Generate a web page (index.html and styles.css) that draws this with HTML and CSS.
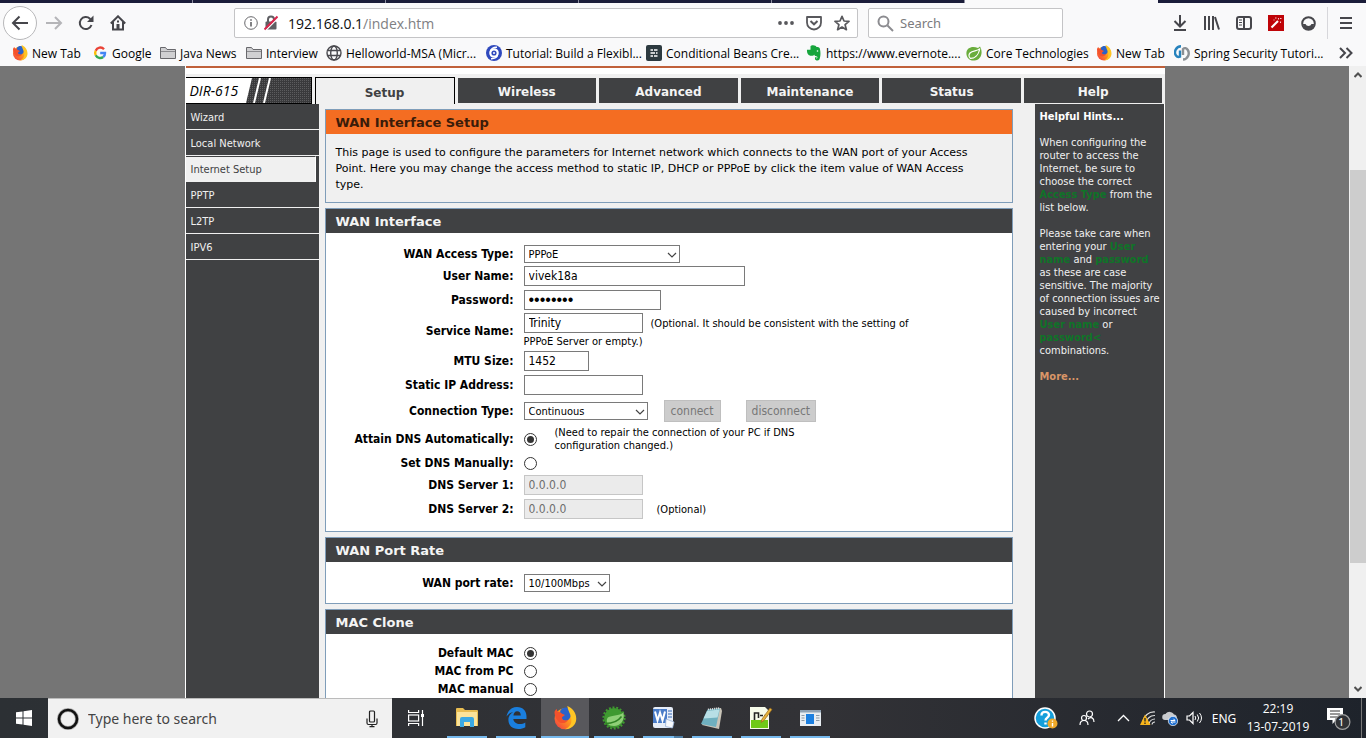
FILE: index.html
```html
<!DOCTYPE html>
<html lang="en">
<head>
<meta charset="utf-8">
<title>D-Link DIR-615 - WAN Interface Setup</title>
<link rel="stylesheet" href="styles.css">
</head>
<body>
<svg class="defs" aria-hidden="true">
  <defs>
    <linearGradient id="flame" x1="1" y1="0" x2="0" y2="1"><stop offset="0" stop-color="#ffe226"/><stop offset=".45" stop-color="#ff9a1a"/><stop offset="1" stop-color="#f0304a"/></linearGradient>
    <pattern id="mesh" width="2" height="2" patternUnits="userSpaceOnUse"><rect width="2" height="2" fill="#3a3a3c"/><rect width="1" height="1" fill="#5c5c5e"/></pattern>
    <symbol id="firefox" viewBox="0 0 16 16">
      <circle cx="8" cy="8.5" r="7" fill="url(#flame)"/>
      <path d="M5 2.800C7-.2 11.500.6 12 4c.3 3-1 5.500-3.500 5.800C6 9.900 4.500 8 4.200 6z" fill="#2a62c9"/>
      <path d="M9.500 0c3 1.200 6 4 6 8.500 0 4-3.300 7-7.500 7 3.500-1.500 5-4.500 4-8C11.500 5 10 3 9.500 0z" fill="#ffc524"/>
      <path d="M1 4c.3-.8.8-1.600 1.500-2 0 .7.300 1.300.8 1.800 1 0 2 .4 2.500 1.200L8 6 6 7.500c0 2 2 2.500 4 1.800-1 2.700-6 3-7.500-.3C1.500 7.500 1 6 1 4z" fill="#f4512c"/>
    </symbol>
    <symbol id="folder" viewBox="0 0 16 16"><path d="M.5 13.500v-11h5l1.500 2h8.500v9z" fill="#d0d0d2" stroke="#68686c"/><path d="M1 6.500h14" stroke="#8c8c90"/></symbol>
    <symbol id="chev" viewBox="0 0 10 6"><path d="M1 1l4 4 4-4" fill="none" stroke="#444" stroke-width="1.200"/></symbol>
  </defs>
</svg>

<header class="browser">
  <div class="tabstrip"><i></i><i></i><i></i><i></i><i></i><i class="current"></i><i></i></div>
  <div class="toolbar">
    <button class="back" aria-label="Back"><svg width="18" height="16" viewBox="0 0 18 16"><path d="M17 8H2M8.500 1.500L2 8l6.500 6.500" fill="none" stroke="#46464b" stroke-width="2"/></svg></button>
    <button class="tool" aria-label="Forward"><svg width="18" height="16" viewBox="0 0 18 16"><path d="M1 8h15M10 2l6 6-6 6" fill="none" stroke="#b5b5b8" stroke-width="2"/></svg></button>
    <button class="tool" aria-label="Reload"><svg width="16" height="16" viewBox="0 0 16 16"><path d="M13.500 10A6 6 0 1 1 12 3.700L13.500 5" fill="none" stroke="#46464b" stroke-width="2"/><path d="M15.500.5V7H9z" fill="#46464b"/></svg></button>
    <button class="tool" aria-label="Home"><svg width="16" height="16" viewBox="0 0 16 16"><path d="M.8 8.500L8 1.300l7.200 7.200M3 7v7.500h10V7" fill="none" stroke="#46464b" stroke-width="2"/><path d="M6.500 14.500V9h3v5.500zM7 5.500h2v2H7z" fill="#46464b"/></svg></button>
    <div class="urlbar">
      <svg width="14" height="14" viewBox="0 0 14 14"><circle cx="7" cy="7" r="6.300" fill="none" stroke="#68686c"/><path d="M7 6v4.500M7 3.300v1.400" stroke="#58585c" stroke-width="1.500"/></svg>
      <svg width="14" height="16" viewBox="0 0 14 16"><path d="M4 7V4.500a3 3 0 0 1 6 0V7" fill="none" stroke="#5f5f63" stroke-width="2"/><rect x="1.500" y="6.500" width="11" height="8" rx="1" fill="#5f5f63"/><path d="M1.500 15.500l12-12" stroke="#fff" stroke-width="1.500"/><path d="M.5 14.500l13-13" stroke="#d7264c" stroke-width="2"/></svg>
      <p class="address">192.168.0.1<span>/index.htm</span></p>
      <svg width="16" height="4" viewBox="0 0 16 4"><g fill="#58585c"><circle cx="2" cy="2" r="1.900"/><circle cx="8" cy="2" r="1.900"/><circle cx="14" cy="2" r="1.900"/></g></svg>
      <svg width="16" height="15" viewBox="0 0 16 15"><path d="M1 1h14v5.500a7 7 0 0 1-14 0z" fill="none" stroke="#58585c" stroke-width="1.800" stroke-linejoin="round"/><path d="M4.500 5L8 8.300 11.500 5" fill="none" stroke="#58585c" stroke-width="2"/></svg>
      <svg width="16" height="16" viewBox="0 0 16 16"><path d="M8 1.300l2 4.700 5 .4-3.900 3.300 1.300 5L8 12l-4.400 2.700 1.300-5L1 6.400 6 6z" fill="none" stroke="#58585c" stroke-width="1.700" stroke-linejoin="round"/></svg>
    </div>
    <label class="searchbar">
      <svg width="17" height="17" viewBox="0 0 17 17"><circle cx="6.500" cy="6.500" r="5" fill="none" stroke="#8c8c90" stroke-width="2"/><path d="M10.500 10.500L16 16" stroke="#8c8c90" stroke-width="2"/></svg>
      <input type="text" placeholder="Search" aria-label="Search the web">
    </label>
    <div class="tools">
      <button class="tool" aria-label="Downloads"><svg width="14" height="16" viewBox="0 0 14 16"><path d="M7 0v11M1.500 6L7 11.500 12.500 6M1 15h12" fill="none" stroke="#46464b" stroke-width="2"/></svg></button>
      <button class="tool" aria-label="Library"><svg width="16" height="14" viewBox="0 0 16 14"><path d="M1 0v14M5 0v14M9 0v14M11 1l4 12.500" fill="none" stroke="#46464b" stroke-width="2"/></svg></button>
      <button class="tool" aria-label="Sidebars"><svg width="16" height="14" viewBox="0 0 16 14"><rect x="1" y="1" width="14" height="12" rx="2" fill="none" stroke="#46464b" stroke-width="2"/><path d="M8 1v12" stroke="#46464b" stroke-width="2"/><path d="M3 4h3M3 6.500h3M3 9h3" stroke="#46464b"/></svg></button>
      <button class="tool" aria-label="Magic wand"><svg width="16" height="16" viewBox="0 0 16 16"><rect width="16" height="16" fill="#bf0408"/><path d="M3.500 12.500L10 6" stroke="#fff" stroke-width="2.200"/><path d="M7 3h1.500M10.500 3v1.500M12.500 6.500v1.500M5.500 5h1M12 3.500h1.500" stroke="#f7c6c6" stroke-width="1.100"/></svg></button>
      <button class="tool" aria-label="Account"><svg width="15" height="15" viewBox="0 0 15 15"><circle cx="7.500" cy="7.500" r="6.300" fill="none" stroke="#46464b" stroke-width="2"/><path d="M2 8h2.500a3.200 3.200 0 0 0 6 0H13c0 3.500-2.500 5.800-5.500 5.800S2 11.500 2 8z" fill="#46464b"/></svg></button>
      <button class="tool menu" aria-label="Menu"><svg width="14" height="12" viewBox="0 0 14 12"><path d="M1 1h12M1 6h12M1 11h12" stroke="#46464b" stroke-width="2"/></svg></button>
    </div>
  </div>
  <nav class="bookmarks">
    <a href="#"><svg width="16" height="16"><use href="#firefox"/></svg>New Tab</a>
    <a href="#"><svg width="16" height="16" viewBox="0 0 16 16"><g fill="none" stroke-width="2.400"><path d="M12 4.200A5 5 0 0 0 3.700 5.700" stroke="#ea4335"/><path d="M3.700 5.700a5 5 0 0 0 0 4.600" stroke="#fbbc05"/><path d="M3.700 10.300a5 5 0 0 0 7.500 1.700" stroke="#34a853"/><path d="M11.200 12A5 5 0 0 0 13 8H8.200" stroke="#4285f4"/></g></svg>Google</a>
    <a href="#"><svg width="16" height="16"><use href="#folder"/></svg>Java News</a>
    <a href="#"><svg width="16" height="16"><use href="#folder"/></svg>Interview</a>
    <a href="#"><svg width="16" height="16" viewBox="0 0 16 16"><g fill="none" stroke="#4a4a4f" stroke-width="1.400"><circle cx="8" cy="8" r="7"/><ellipse cx="8" cy="8" rx="3.300" ry="7"/><path d="M2 5.500h12M2 10.500h12"/></g></svg>Helloworld-MSA (Micr...</a>
    <a href="#"><svg width="16" height="16" viewBox="0 0 16 16"><circle cx="8" cy="8" r="8" fill="#2f49bd"/><circle cx="8" cy="8" r="3.700" fill="none" stroke="#fff" stroke-width="2.200"/><circle cx="8" cy="8" r="1" fill="#fff"/><path d="M4.500 7C4.500 3.500 7.500 2 11 2.200M11.500 9c0 3.500-3 5-6.500 4.800" fill="none" stroke="#fff" stroke-width="1.400"/></svg>Tutorial: Build a Flexibl...</a>
    <a href="#"><svg width="16" height="16" viewBox="0 0 16 16"><rect width="16" height="16" rx="2" fill="#2d3a40"/><path d="M4.500 5h2.500M8 5h3.500M4.500 8H9M10 8h1.500M4.500 11h2.500M8 11h3.500" stroke="#fff" stroke-width="1.500"/></svg>Conditional Beans Cre...</a>
    <a href="#"><svg width="16" height="16" viewBox="0 0 16 16"><path d="M1.500 4L5 .7C8-.3 10 1 10.500 2c2 0 3.500.5 3.500 2.500.8 3 .5 7.500-.6 10-1 1.500-4 1.300-4.400-.5-.2-1.500.5-2.300 1.700-2.300 0 .8-.3 1.300-.6 1.800 1.800.3 1.600-2.500 0-2.500-1.200.3-1.800-1-1.800-1.600-.5 1.300-2.300 1.600-4 1.300C1.500 10 .8 7 1 4.700h3.500V1.300z" fill="#16a53c"/><circle cx="11.500" cy="6" r=".8" fill="#fff"/></svg>https://www.evernote....</a>
    <a href="#"><svg width="16" height="16" viewBox="0 0 16 16"><path d="M14 1.500c3.500 6 1 13.500-5.500 14C3 16 .3 12 .4 8 .5 2.500 6.500.5 12 3z" fill="#6aad3d"/><path d="M13.800 3.500C11.500 6.800 7 5 4 8c-1.500 1.700-1.300 4 .3 5.300C8 13.500 12.500 11 13.800 3.500z" fill="#6aad3d" stroke="#fff" stroke-width="1.200"/></svg>Core Technologies</a>
    <a href="#"><svg width="16" height="16"><use href="#firefox"/></svg>New Tab</a>
    <a href="#"><svg width="16" height="16" viewBox="0 0 16 16"><path d="M7 1.300C2 1.500-.5 7 2 10.500c1 1.500 2.500 1.800 4 1.200V5.500" fill="none" stroke="#2783bd" stroke-width="2.400"/><path d="M9 14.500c5 0 7-6 4.800-9.500C12.500 3 10.500 2.500 9 4v6" fill="none" stroke="#8b9094" stroke-width="2.400"/></svg>Spring Security Tutori...</a>
    <button class="overflow" aria-label="More bookmarks"><svg width="14" height="12" viewBox="0 0 14 12"><path d="M1 1l5 5-5 5M7.500 1l5 5-5 5" fill="none" stroke="#46464b" stroke-width="2"/></svg></button>
  </nav>
</header>

<div class="viewport">
  <div class="canvas">
    <div class="page">
      <div class="banner"></div>
      <nav class="tabs">
        <div class="model"><em>DIR-615</em>
          <svg width="65" height="25" viewBox="0 0 65 25"><path d="M6 0h59v25H0z" fill="url(#mesh)"/><path d="M14 0L8 25M24 0l-6 25" stroke="#fff" stroke-width="2"/></svg>
        </div>
        <a class="active" href="#">Setup</a><a href="#">Wireless</a><a href="#">Advanced</a><a href="#">Maintenance</a><a href="#">Status</a><a href="#">Help</a>
      </nav>
      <div class="columns">
        <nav class="side">
          <a href="#">Wizard</a><a href="#">Local Network</a><a class="active" href="#">Internet Setup</a><a href="#">PPTP</a><a href="#">L2TP</a><a href="#">IPV6</a>
        </nav>
        <main class="content">
          <section class="panel intro">
            <h1>WAN Interface Setup</h1>
            <p>This page is used to configure the parameters for Internet network which connects to the WAN port of your Access<br>Point. Here you may change the access method to static IP, DHCP or PPPoE by click the item value of WAN Access<br>type.</p>
          </section>
          <section class="panel">
            <h2>WAN Interface</h2>
            <form class="fields">
              <div class="row short"><label for="wan">WAN Access Type:</label><div class="cell"><span class="drop w-type"><select id="wan"><option>PPPoE</option></select><svg width="10" height="6"><use href="#chev"/></svg></span></div></div>
              <div class="row"><label for="user">User Name:</label><div class="cell"><input class="w-user" id="user" type="text" value="vivek18a"></div></div>
              <div class="row"><label for="pass">Password:</label><div class="cell"><input class="w-pass" id="pass" type="password" value="password"></div></div>
              <div class="row service"><label for="svc">Service Name:</label><div class="cell"><input class="w-mid" id="svc" type="text" value="Trinity"><small>(Optional. It should be consistent with the setting of</small><small class="wrap">PPPoE Server or empty.)</small></div></div>
              <div class="row"><label for="mtu">MTU Size:</label><div class="cell"><input class="w-mtu" id="mtu" type="text" value="1452"></div></div>
              <div class="row"><label for="sip">Static IP Address:</label><div class="cell"><input class="w-mid" id="sip" type="text"></div></div>
              <div class="row tall"><label for="conn">Connection Type:</label><div class="cell"><span class="drop w-conn"><select id="conn"><option>Continuous</option></select><svg width="10" height="6"><use href="#chev"/></svg></span><button type="button" class="act" disabled>connect</button><button type="button" class="act far" disabled>disconnect</button></div></div>
              <div class="row tall"><label for="auto">Attain DNS Automatically:</label><div class="cell"><input type="radio" id="auto" name="dns" checked><small class="note">(Need to repair the connection of your PC if DNS<br>configuration changed.)</small></div></div>
              <div class="row short"><label for="man">Set DNS Manually:</label><div class="cell"><input type="radio" id="man" name="dns"></div></div>
              <div class="row"><label for="d1">DNS Server 1:</label><div class="cell"><input class="w-mid" id="d1" type="text" value="0.0.0.0" disabled></div></div>
              <div class="row"><label for="d2">DNS Server 2:</label><div class="cell"><input class="w-mid" id="d2" type="text" value="0.0.0.0" disabled><small class="opt">(Optional)</small></div></div>
            </form>
          </section>
          <section class="panel">
            <h2>WAN Port Rate</h2>
            <form class="fields">
              <div class="row short"><label for="rate">WAN port rate:</label><div class="cell"><span class="drop w-rate"><select id="rate"><option>10/100Mbps</option></select><svg width="10" height="6"><use href="#chev"/></svg></span></div></div>
            </form>
          </section>
          <section class="panel">
            <h2>MAC Clone</h2>
            <form class="fields mac">
              <div class="row"><label for="m1">Default MAC</label><div class="cell"><input type="radio" id="m1" name="mac" checked></div></div>
              <div class="row"><label for="m2">MAC from PC</label><div class="cell"><input type="radio" id="m2" name="mac"></div></div>
              <div class="row"><label for="m3">MAC manual</label><div class="cell"><input type="radio" id="m3" name="mac"></div></div>
            </form>
          </section>
        </main>
        <aside class="hints">
          <h2>Helpful Hints...</h2>
          <p>When configuring the<br>router to access the<br>Internet, be sure to<br>choose the correct<br><b>Access Type</b> from the<br>list below.</p>
          <p>Please take care when<br>entering your <b>User<br>name</b> and <b>password</b><br>as these are case<br>sensitive. The majority<br>of connection issues are<br>caused by incorrect<br><b>User name</b> or<br><b>password&lt;</b><br>combinations.</p>
          <a href="#">More...</a>
        </aside>
      </div>
    </div>
  </div>
  <div class="scroll">
    <svg width="8" height="6" viewBox="0 0 8 6"><path d="M.5 5L4 1.500 7.500 5" fill="none" stroke="#505050" stroke-width="2"/></svg>
    <div class="track"><div class="thumb"></div></div>
    <svg width="8" height="6" viewBox="0 0 8 6"><path d="M.5 1L4 4.500 7.500 1" fill="none" stroke="#505050" stroke-width="2"/></svg>
  </div>
</div>

<footer class="taskbar">
  <button class="start" aria-label="Start"><svg width="16" height="16" viewBox="0 0 16 16"><path d="M0 2.300L6.500 1.400v6.100H0zM7.500 1.200L16 0v7.500H7.500zM0 8.500h6.500v6.100L0 13.700zM7.500 8.500H16V16l-8.500-1.200z" fill="#fff"/></svg></button>
  <label class="ask">
    <svg width="22" height="22" viewBox="0 0 22 22"><circle cx="11" cy="11" r="9" fill="none" stroke="#b0b0b0" stroke-width="4"/><circle cx="11" cy="11" r="9" fill="none" stroke="#111" stroke-width="2.600"/></svg>
    <input type="text" placeholder="Type here to search" aria-label="Windows search">
    <svg width="12" height="18" viewBox="0 0 12 18"><rect x="3.500" y="1" width="5" height="11" rx="1" fill="none" stroke="#222" stroke-width="1.200"/><path d="M1 8.500V13q0 1.500 1.500 1.500h7Q11 14.500 11 13V8.500M6 14.500v2M3.500 16.600h5" fill="none" stroke="#222" stroke-width="1.200"/></svg>
  </label>
  <div class="apps">
    <button class="app view" aria-label="Task view"><svg width="16" height="16" viewBox="0 0 16 16"><g fill="none" stroke="#fff" stroke-width="1.200"><path d="M.6 0v2.500h10V0M.6 16v-2.500h10V16"/><rect x=".6" y="5" width="10" height="6"/><path d="M14.500 0v16"/></g><rect x="13" y="4" width="3" height="3" fill="#fff"/></svg></button>
    <button class="app" aria-label="File Explorer"><svg width="22" height="20" viewBox="0 0 22 20"><path d="M0 1q0-1 1-1h6l2 2h12q1 0 1 1v15H0z" fill="#e8bd52"/><path d="M1 4h20v14H1z" fill="#fbe39a"/><path d="M4 19v-8q0-2 2-2h10q2 0 2 2v8h-4v-5H8v5z" fill="#3ba9e3"/></svg></button>
    <button class="app" aria-label="Edge"><svg width="21" height="22" viewBox="0 0 21 22"><path d="M.5 9.500C1.500 3.500 6 0 11 0c6 0 9.500 4 9.500 9.500V12H7.300c.4 3.500 3.400 5 6.400 5 2.200 0 4-.6 5.600-1.600v4.800C17.500 21.300 15 22 12.300 22 6 22 2.400 18 2.400 12.700c0-3.400 1.800-6 4.700-7.400C4.300 5.500 2 7 .5 9.500zM7.400 8.500h7.400c0-2.700-1.500-4.200-3.700-4.200-2 0-3.400 1.700-3.700 4.200z" fill="#1a7fde"/></svg></button>
    <button class="app focus" aria-label="Firefox"><svg width="24" height="24"><use href="#firefox"/></svg></button>
    <button class="app" aria-label="Spring Tool Suite"><svg width="24" height="24" viewBox="0 0 24 24"><circle cx="12" cy="12" r="10.600" fill="none" stroke="#3f9a30" stroke-width="2" stroke-dasharray="2 1.700"/><circle cx="12" cy="12" r="10" fill="#3f9a30"/><path d="M21.500 6.500c1.500 8-3 13.500-9.500 13.500-6 0-8-3.500-7-7C6.500 8.500 16 11 21.500 6.500z" fill="#8fd077"/><path d="M3.500 17.500c6 0 12-1.500 16-7" fill="none" stroke="#2f8424" stroke-width="1.500"/></svg></button>
    <button class="app stacked" aria-label="Word"><svg width="23" height="22" viewBox="0 0 23 22"><path d="M3 0h16q2 0 2 2v17q0 2-2 2H3q-2 0-2-2V2q0-2 2-2z" fill="#e6edf8"/><path d="M1 2h14v14H1z" fill="#4a7cc8"/><path d="M3 4.500l2.500 9 2.500-8 2.500 8L13 4.500" fill="none" stroke="#fff" stroke-width="2"/><path d="M16 4h4M16 7h4M16 10h4" stroke="#6d93cc" stroke-width="1.500"/><path d="M14 12l8 3-1.500 6-7-1.500z" fill="#f7f9fc" stroke="#9bb2d6" stroke-width=".8"/></svg></button>
    <button class="app" aria-label="Notepad"><svg width="24" height="22" viewBox="0 0 24 22"><path d="M9 2.500L21 1l1 3-3 18L2 18z" fill="#c9c4b8"/><path d="M7.500 2.500L20 1.200 16 20 1 17z" fill="#6fb0bf"/><path d="M7 4l12.500-1.500-2 8-14 1z" fill="#b8dfe6"/><path d="M8 2.500L20 1" stroke="#ddd" stroke-width="2" stroke-dasharray="1 1"/></svg></button>
    <button class="app" aria-label="Notepad++"><svg width="24" height="24" viewBox="0 0 24 24"><path d="M1 1h15l4 4v18H1z" fill="#f6fbea"/><path d="M2 14h17v8H2z" fill="#6fc918"/><path d="M5.500 14V7h4v5M11 9.500h3M15.500 9.500h3" fill="none" stroke="#222" stroke-width="1.600"/><path d="M21 2l2 1.500-8 11-3 2 1-3.500z" fill="#e6b23c" stroke="#9a6a1b" stroke-width=".7"/></svg></button>
    <button class="app" aria-label="Window"><svg width="21" height="16" viewBox="0 0 21 16"><path d="M0 0h21v16H0z" fill="#e8edf2"/><path d="M0 0h21v2.500H0z" fill="#8fa1b3"/><path d="M6 4h8v10H6z" fill="#1c7fe0"/><path d="M1.500 5.500h3M1.500 8h3M1.500 10.500h3M16 5.500h3.500M16 8h3.500M16 10.500h3.500" stroke="#8d99a5"/></svg></button>
  </div>
  <div class="tray">
    <span class="t-help"><svg width="24" height="22" viewBox="0 0 24 22"><circle cx="11" cy="11" r="10" fill="#159fdb" stroke="#fff" stroke-width="1.500"/><path d="M7.500 8.500c0-5 7.500-4.500 7.500-.5 0 2.500-3.500 2.800-3.500 5.500M11.500 15.500v2" fill="none" stroke="#fff" stroke-width="2.400"/><circle cx="18.500" cy="16.500" r="5" fill="#f0a92a"/><path d="M18.500 13.500v1.300M18.500 16v3.500" stroke="#fff" stroke-width="1.400"/></svg></span>
    <span class="t-people"><svg width="16" height="16" viewBox="0 0 16 16"><g fill="none" stroke="#fff" stroke-width="1.200"><circle cx="10.500" cy="4" r="3"/><circle cx="5" cy="8" r="2.500"/><path d="M1 15c0-6 8-6 8 0M9 9c3-3 6-1 6 3"/></g></svg></span>
    <span class="t-up"><svg width="13" height="8" viewBox="0 0 13 8"><path d="M1 7l5.500-5.500L12 7" fill="none" stroke="#fff" stroke-width="1.300"/></svg></span>
    <span class="t-wifi"><svg width="16" height="16" viewBox="0 0 16 16"><g fill="none" stroke="#ddd" stroke-width="1.200"><path d="M3 12A11 11 0 0 1 15 2M6 13a8.500 8.500 0 0 1 9-7.500M9 14a6 6 0 0 1 6-5M12 14.500a3 3 0 0 1 3-2.500"/></g><path d="M5 4.500L10.500 15H0z" fill="#f5b31b"/><path d="M5 8v3.500M5 12.500v1.500" stroke="#222" stroke-width="1.300"/></svg></span>
    <span class="t-cloud"><svg width="16" height="15" viewBox="0 0 16 15"><path d="M3 9a3 3 0 0 1 .5-6A5 5 0 0 1 12 3.500c3 0 4 4 1.500 5.500z" fill="#c9cbce"/><circle cx="11" cy="10" r="4.700" fill="#1f6fd0" stroke="#fff" stroke-width=".7"/><path d="M8.500 9.500h4.500l-1.500-1.700M13.500 11H9l1.500 1.700" fill="none" stroke="#fff"/></svg></span>
    <span class="t-vol"><svg width="17" height="14" viewBox="0 0 17 14"><path d="M1 5h2.500L7 1.500v11L3.500 9H1z" fill="none" stroke="#fff" stroke-width="1.200"/><path d="M9 5q1.500 2 0 4M11.300 3.500q2.700 3.500 0 7M13.500 2q4 5 0 10" fill="none" stroke="#fff"/></svg></span>
    <span class="t-lang">ENG</span>
    <span class="t-clock">22:19<br>13-07-2019</span>
    <span class="t-note"><svg width="26" height="26" viewBox="0 0 26 26"><path d="M2 3h16v12h-7l-3.500 4v-4H2z" fill="#fff"/><path d="M5 6h10M5 9h10M5 12h7" stroke="#333"/><circle cx="17.500" cy="17" r="7.400" fill="#303236" stroke="#a0a0a0" stroke-width="1.200"/></svg><b>1</b></span>
    <span class="t-desk"></span>
  </div>
</footer>
</body>
</html>
```

FILE: styles.css
```css
* { box-sizing: border-box; }
body {
  margin: 0;
  height: 100vh;
  display: flex;
  flex-direction: column;
  overflow: hidden;
  font-family: "DejaVu Sans Condensed", "DejaVu Sans", sans-serif;
  font-size: 12px;
  color: #000;
}
a { text-decoration: none; color: inherit; }
button { border: 0; padding: 0; background: none; font: inherit; }
h1, h2, p { margin: 0; }
svg { display: block; flex: none; }
.defs { position: absolute; width: 0; height: 0; }

/* browser chrome */
.browser { background: #f9f9fa; font-family: "Open Sans", "Noto Sans", sans-serif; flex: none; }
.tabstrip { display: flex; height: 3px; background: #1b1d3a; }
.tabstrip i { flex: 0 0 193px; border-right: 1px solid #8d8ea0; }
.tabstrip i:last-child { border: 0; flex: 1; }
.tabstrip .current { background: #f9f9fa; border: 0; }
.toolbar { display: flex; align-items: center; height: 40px; padding: 0 3px; }
.back { width: 34px; height: 34px; border: 1px solid #b8b8ba; border-radius: 50%; background: #fff; display: grid; place-items: center; margin-right: 1px; }
.tool { width: 32px; height: 32px; display: grid; place-items: center; }
.urlbar { flex: 1; height: 30px; margin-left: 100px; padding: 0 7px 0 9px; border: 1px solid #c4c4c6; border-radius: 2px; background: #fff; display: flex; align-items: center; gap: 6px; }
.address { flex: 1; margin-left: 4px; font-size: 14px; color: #0c0c0d; }
.address span { color: #808083; }
.urlbar svg:nth-of-type(n+4) { margin-left: 6px; }
.searchbar { width: 195px; height: 30px; margin-left: 10px; padding-left: 8px; border: 1px solid #c4c4c6; border-radius: 2px; background: #fff; display: flex; align-items: center; gap: 6px; }
.searchbar input, .ask input { border: 0; outline: 0; background: none; min-width: 0; flex: 1; font: 14px "Noto Sans", sans-serif; padding: 0; }
.searchbar input { font-size: 13px; }
.searchbar input::placeholder { color: #7b7b7e; }
.tools { display: flex; margin-left: 101px; }
.menu { margin-left: 3px; border-left: 1px solid #d7d7db; width: 36px; }
.bookmarks { display: grid; grid-template-columns: 80px 68px 86px 80px 160px 160px 160px 160px 130px 78px 1fr 20px; height: 23px; padding: 0 10px 3px 12px; align-items: center; white-space: nowrap; }
.bookmarks a { display: flex; align-items: center; gap: 4px; }
.overflow { display: grid; place-items: center; }

/* viewport */
.viewport { flex: 1; min-height: 0; display: flex; }
.canvas { flex: 1; background: #757575; overflow: hidden; }
.page { max-width: 980px; min-height: 100%; margin: 0 auto; background: #f0f0f0; border-left: 1px solid #fff; display: flex; flex-direction: column; }
.banner { height: 8px; border-top: 2px solid #c0603a; background: #fff; flex: none; }
.tabs { display: flex; align-items: flex-end; gap: 3px; height: 30px; padding: 3px 2px 0 0; font: bold 12px "DejaVu Sans", sans-serif; }
.tabs a { flex: 1; height: 25px; padding-top: 3px; background: #404143; color: #f4f4f4; display: grid; place-items: center; margin-bottom: 1px; }
.tabs .active { flex: 0 0 140px; height: 27px; margin: 0; background: #f0f0f0; color: #404143; border: 1px solid #000; border-bottom: 0; }
.model { flex: 0 0 126px; height: 27px; border: 1px solid #000; border-left: 0; background: #fff; display: flex; align-items: center; justify-content: space-between; padding-left: 4px; }
.model em { font: italic 14px "Open Sans", sans-serif; }
.columns { flex: 1; display: flex; }

.side { flex: 0 0 133px; background: #404143; color: #f0f0f0; font-size: 11px; }
.side a { display: flex; align-items: center; height: 26px; padding: 1px 0 0 5px; border-bottom: 1px solid #f0f0f0; }
.side .active { margin-right: 3px; background: #f0f0f0; color: #404143; border-top: 1px solid #404143; border-right: 1px solid #fff; }

.content { flex: 1; min-width: 0; padding: 5px 22px 0 6px; display: flex; flex-direction: column; gap: 5px; }
.panel { border: 1px solid #7f9db9; background: #fff; }
.panel h1, .panel h2 { height: 24px; padding: 0 10px; font: bold 13px/25px "DejaVu Sans", sans-serif; background: #404143; color: #f4f4f4; }
.panel h1 { background: #f46d22; color: #3a1c0a; }
.intro { background: #f0f0f0; }
.intro p { padding: 11px 10px 9px; font: 11px/16px "DejaVu Sans", sans-serif; white-space: nowrap; }

.fields { padding: 11px 0 10px; }
.row { display: grid; grid-template-columns: 188px 1fr; column-gap: 10px; align-items: center; min-height: 24px; }
.row > label { text-align: right; font-weight: bold; white-space: nowrap; }
.short { min-height: 20px; }
.tall { min-height: 28px; }
.mac { padding-top: 10px; }
.mac .row { min-height: 18px; }
.cell { display: flex; flex-wrap: wrap; align-items: center; }
.cell input[type=text], .cell input[type=password] { height: 20px; border: 1px solid #7a7a7a; background: #fff; padding: 0 4px; font: inherit; color: #000; }
.cell input[type=password] { font: 16px "Liberation Sans", sans-serif; }
.cell input[type=text]:disabled { background: #ebebeb; border-color: #c6c6c6; color: #6d6d6d; }
.w-user { width: 221px; }
.w-pass { width: 137px; }
.w-mid { width: 119px; }
.w-mtu { width: 65px; }
.w-type { width: 156px; }
.w-conn { width: 124px; }
.w-rate { width: 86px; }
.cell small { font-size: 11px; line-height: 13px; margin-left: 8px; }
.cell .wrap { flex-basis: 100%; margin: 2px 0 0; }
.cell .note { margin-left: 18px; }
.cell .opt { margin-left: 14px; }
.service { min-height: 37px; }
.drop { position: relative; display: block; height: 18px; }
.drop select { appearance: none; width: 100%; height: 18px; border: 1px solid #7a7a7a; border-radius: 0; background: #fff; padding: 0 4px; font: inherit; font-size: 11px; color: #000; }
.drop svg { position: absolute; right: 3px; top: 7px; pointer-events: none; }
.act { height: 22px; margin-left: 16px; padding: 0 6px; background: #ccc; border: 1px solid #bfbfbf; color: #777; }
.far { margin-left: 25px; padding: 0 5px; }
input[type=radio] { appearance: none; width: 13px; height: 13px; margin: 0; border: 1px solid #333; border-radius: 50%; background: #fff; display: grid; place-items: center; }
input[type=radio]:checked::before { content: ""; width: 7px; height: 7px; border-radius: 50%; background: #333; }

.hints { flex: 0 0 130px; padding: 6px 0 0 5px; background: #404143; border-right: 1px solid #fff; color: #f0f0f0; font-size: 11px; line-height: 13px; white-space: nowrap; }
.hints h2 { font-size: 11px; line-height: 13px; color: #fff; }
.hints p { margin: 13px 0; }
.hints b { color: #0f7428; }
.hints a { color: #d99567; font-weight: bold; }

.scroll { flex: 0 0 17px; background: #f0f0f0; display: flex; flex-direction: column; align-items: center; padding: 6px 0; }
.track { flex: 1; align-self: stretch; display: flex; flex-direction: column; padding: 92px 0 0 1px; }
.thumb { flex: 0 0 393px; background: #cdcdcd; }

/* taskbar */
.taskbar { flex: none; display: flex; height: 40px; background: linear-gradient(90deg, #2c3034, #323236 60%, #1e232b); color: #fff; font-family: "Noto Sans", sans-serif; }
.start { width: 48px; display: grid; place-items: center; }
.ask { width: 344px; padding: 0 14px 0 9px; background: #f1f1f1; border-top: 1px solid #bbb; display: flex; align-items: center; gap: 9px; }
.ask input::placeholder { color: #444; }
.apps { display: flex; flex: 1; gap: 1px; }
.app { width: 48px; display: grid; place-items: center; background: linear-gradient(#76b9ed, #76b9ed) center bottom / 40px 2px no-repeat; }
.view { background: none; margin-right: 2px; }
.focus { background: linear-gradient(#76b9ed, #76b9ed) center bottom / 48px 2px no-repeat #58585c; }
.stacked { background-image: linear-gradient(90deg, #76b9ed 78%, #4f7fa6 78%); }
.tray { display: flex; align-items: center; }
.tray span { display: grid; place-items: center; }
.t-help { width: 40px; }
.t-people { width: 42px; }
.t-up { width: 30px; }
.t-wifi { width: 20px; }
.t-cloud, .t-vol { width: 24px; }
.t-lang { width: 36px; }
.tray .t-clock { width: 72px; display: block; text-align: center; font: 12px/18px "Open Sans", sans-serif; white-space: nowrap; }
.tray .t-note { width: 47px; position: relative; }
.t-note b { position: absolute; left: 24px; top: 9px; font: 11px/16px "Noto Sans", sans-serif; }
.t-desk { width: 5px; height: 40px; border-left: 1px solid #777; }
```
